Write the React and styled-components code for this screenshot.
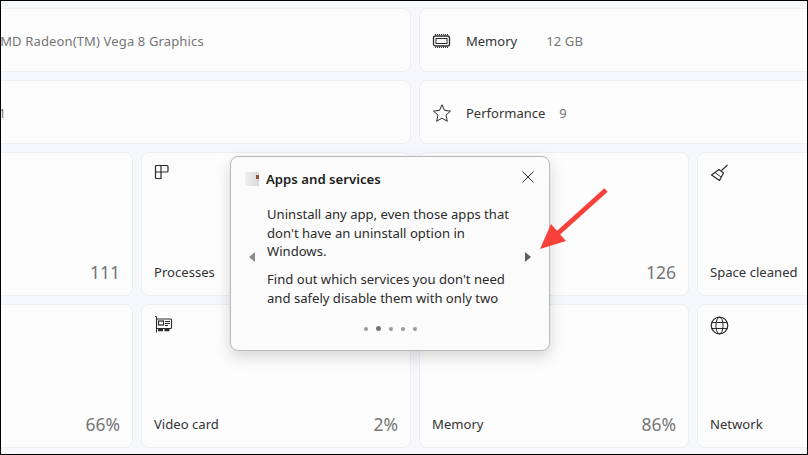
import React from 'react';
import styled, { createGlobalStyle } from 'styled-components';

const GlobalStyle = createGlobalStyle`
  * { box-sizing: border-box; }
  html, body { margin: 0; padding: 0; }
  body {
    width: 808px;
    height: 455px;
    overflow: hidden;
    font-family: "Noto Sans", "Open Sans", "Liberation Sans", sans-serif;
  }
`;

const Screen = styled.div`
  position: relative;
  width: 808px;
  height: 455px;
  overflow: hidden;
  border: 1px solid #000;
  background: #f6f8fb;
`;

const Dashboard = styled.div`
  display: grid;
  grid-template-columns: repeat(4, 270px);
  grid-template-rows: 64px 64px 144px 144px;
  gap: 8px;
  width: max-content;
  margin: 7px 0 0 -138px;
`;

const Card = styled.div`
  background: #fdfdfe;
  border: 1px solid #eceef3;
  border-radius: 8px;
`;

const WideCard = styled(Card)`
  grid-column: span 2;
  display: flex;
  align-items: center;
  padding: 1px 0 0 12px;
`;

const WideIcon = styled.span`
  display: flex;
  justify-content: center;
  width: 20px;
  margin-right: 14px;
  color: #2b2b2b;
`;

const WideLabel = styled.span`
  font-size: 13px;
  color: #333;
  margin-right: ${(p) => p.$gap}px;
`;

const WideValue = styled.span`
  font-size: 13px;
  letter-spacing: 0.14px;
  color: #757575;
`;

const TileCard = styled(Card)`
  display: flex;
  flex-direction: column;
  justify-content: space-between;
  padding: 11px 12px 11px 12px;
`;

const TileIcon = styled.span`
  display: flex;
  height: 20px;
  color: #2b2b2b;
`;

const TileFooter = styled.div`
  display: flex;
  align-items: center;
  justify-content: space-between;
  min-height: 24px;
`;

const TileLabel = styled.span`
  font-size: 13.1px;
  color: #333;
`;

const TileValue = styled.span`
  font-size: 17.5px;
  color: #757575;
`;

const Popup = styled.div`
  position: absolute;
  left: 229px;
  top: 155px;
  width: 320px;
  height: 195px;
  display: flex;
  flex-direction: column;
  background: #fbfbfb;
  border: 1px solid #b9b9b9;
  border-radius: 8px;
  box-shadow: 0 6px 16px rgba(0, 0, 0, 0.16);
`;

const PopupHeader = styled.div`
  display: flex;
  align-items: center;
  height: 20px;
  margin: 12px 14px 0 14px;
`;

const PopupIcon = styled.span`
  position: relative;
  width: 14px;
  height: 14px;
  margin-right: 7px;
  background: linear-gradient(90deg, #f0f0f0, #d9d7d8);

  &::after {
    content: "";
    position: absolute;
    right: 0;
    top: 3px;
    width: 3px;
    height: 4px;
    background: #94503f;
  }
`;

const PopupTitle = styled.span`
  flex: 1;
  font-size: 13.2px;
  font-weight: 600;
  color: #1c1c1c;
`;

const CloseButton = styled.span`
  display: flex;
  align-self: flex-start;
  margin-top: 1px;
  color: #333;
`;

const PopupBody = styled.div`
  display: flex;
  align-items: center;
  gap: 12px;
  height: 108px;
  margin-top: 13px;
  padding: 0 18px;
`;

const Slides = styled.div`
  flex: 1;
  display: flex;
  flex-direction: column;
  gap: 9.500px;
  font-size: 13.1px;
  line-height: 18.500px;
  color: #2b2b2b;
`;

const Slide = styled.p`
  margin: 0;
`;

const NavArrow = styled.span`
  flex: none;
  width: 0;
  height: 0;
  margin-top: 2px;
  border-top: 5px solid transparent;
  border-bottom: 5px solid transparent;
  ${(p) => (p.$right ? 'border-left: 6px solid #5f5f5f;' : 'border-right: 6px solid #8a8a8a;')}
`;

const Dots = styled.div`
  display: flex;
  justify-content: center;
  align-items: center;
  gap: 8px;
  margin-top: 16px;
`;

const Dot = styled.span`
  width: ${(p) => (p.$active ? 5 : 4)}px;
  height: ${(p) => (p.$active ? 5 : 4)}px;
  border-radius: 50%;
  background: ${(p) => (p.$active ? '#777' : '#999')};
`;

const PointerArrow = styled.svg`
  position: absolute;
  left: 529px;
  top: 179px;
`;

const Svg = ({ w = 20, h = 20, children }) => (
  <svg width={w} height={h} viewBox={`0 0 ${w} ${h}`} fill="none" stroke="currentColor" strokeWidth="1">
    {children}
  </svg>
);

const ChipIcon = () => (
  <Svg w={20} h={16}>
    <rect x="1.500" y="3" width="16" height="10" rx="2" strokeWidth="1.300" />
    <rect x="4" y="5.500" width="11" height="5" />
    <path d="M3 1.500h13M3 14.500h13" strokeDasharray="1 1" />
  </Svg>
);

const StarIcon = () => (
  <Svg w={20} h={20}>
    <path d="M10 1.800l2.500 5.600 6 .7-4.500 4.100 1.300 6L10 15.200l-5.300 3 1.300-6L1.500 8.100l6-.7z" strokeWidth="1" strokeLinejoin="round" />
  </Svg>
);

const ProcessesIcon = () => (
  <Svg w={16} h={16}>
    <path d="M1.500 2.500a1 1 0 0 1 1-1h4.500v13H2.500a1 1 0 0 1-1-1z" strokeWidth="1.200" />
    <path d="M7 1.500h6a1 1 0 0 1 1 1v4.500a1 1 0 0 1-1 1H1.500" strokeWidth="1.200" />
  </Svg>
);

const CardIcon = () => (
  <Svg w={19} h={17}>
    <path d="M1 .5h1.500v16" />
    <rect x="2.500" y="3" width="15" height="9.500" rx="1" strokeWidth="1.100" />
    <rect x="4.500" y="5" width="5" height="4" strokeWidth="1.200" />
    <path d="M11 5.500h5M11 7.500h5M11 9.500h3" />
    <path d="M4 14h5M10.500 14h5" strokeWidth="2.500" />
  </Svg>
);

const BroomIcon = () => (
  <Svg w={19} h={19}>
    <path d="M17.500 1l-6 5.500" strokeWidth="1.100" />
    <path d="M9 5.500l4.500 3.500-4 7.500-8-5.500z" strokeWidth="1.200" strokeLinejoin="round" />
    <path d="M5 8.500l6 4.500" />
  </Svg>
);

const GlobeIcon = () => (
  <Svg w={19} h={19}>
    <circle cx="9.500" cy="9.500" r="8.300" strokeWidth="1.200" />
    <ellipse cx="9.500" cy="9.500" rx="3.600" ry="8.300" />
    <path d="M1.800 6.500h15.400M1.800 12.500h15.400" />
  </Svg>
);

const tiles = [
  { value: '111' },
  { label: 'Processes', icon: <ProcessesIcon /> },
  { value: '126' },
  { label: 'Space cleaned', icon: <BroomIcon /> },
  { value: '66%' },
  { label: 'Video card', value: '2%', icon: <CardIcon /> },
  { label: 'Memory', value: '86%' },
  { label: 'Network', icon: <GlobeIcon /> },
];

const App = () => (
  <>
    <GlobalStyle />
    <Screen>
      <Dashboard>
        <WideCard>
          <WideIcon />
          <WideLabel $gap={28}>Graphics</WideLabel>
          <WideValue>AMD Radeon(TM) Vega 8 Graphics</WideValue>
        </WideCard>
        <WideCard>
          <WideIcon><ChipIcon /></WideIcon>
          <WideLabel $gap={29}>Memory</WideLabel>
          <WideValue>12 GB</WideValue>
        </WideCard>
        <WideCard>
          <WideIcon />
          <WideLabel $gap={41}>Storage</WideLabel>
          <WideValue>1</WideValue>
        </WideCard>
        <WideCard>
          <WideIcon><StarIcon /></WideIcon>
          <WideLabel $gap={14}>Performance</WideLabel>
          <WideValue>9</WideValue>
        </WideCard>
        {tiles.map((tile, index) => (
          <TileCard key={index}>
            <TileIcon>{tile.icon}</TileIcon>
            <TileFooter>
              <TileLabel>{tile.label}</TileLabel>
              <TileValue>{tile.value}</TileValue>
            </TileFooter>
          </TileCard>
        ))}
      </Dashboard>

      <Popup>
        <PopupHeader>
          <PopupIcon />
          <PopupTitle>Apps and services</PopupTitle>
          <CloseButton>
            <Svg w={14} h={14}>
              <path d="M1.500 1.500l11 11M12.500 1.500l-11 11" />
            </Svg>
          </CloseButton>
        </PopupHeader>
        <PopupBody>
          <NavArrow />
          <Slides>
            <Slide>Uninstall any app, even those apps that don't have an uninstall option in Windows.</Slide>
            <Slide>Find out which services you don't need and safely disable them with only two</Slide>
          </Slides>
          <NavArrow $right />
        </PopupBody>
        <Dots>
          {[0, 1, 2, 3, 4].map((i) => (
            <Dot key={i} $active={i === 1} />
          ))}
        </Dots>
      </Popup>

      <PointerArrow width="85" height="85" viewBox="0 0 85 85">
        <path d="M76 10L26 55" stroke="#f8413a" strokeWidth="5" />
        <path d="M10 69L21 44L36 61z" fill="#f8413a" />
      </PointerArrow>
    </Screen>
  </>
);

export default App;
